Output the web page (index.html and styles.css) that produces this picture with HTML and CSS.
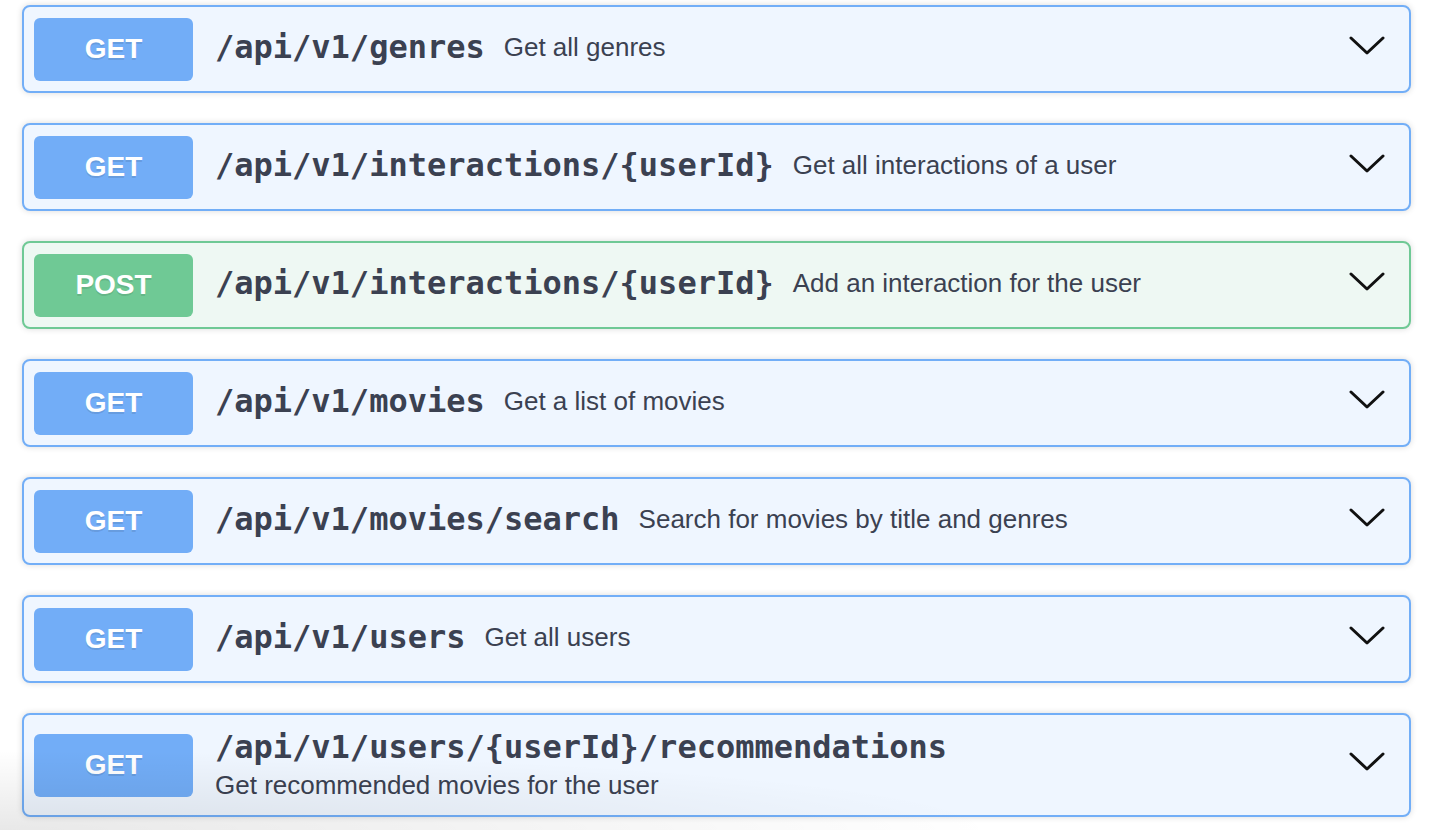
FILE: index.html
```html
<!DOCTYPE html>
<html>
<head>
<meta charset="utf-8">
<link rel="stylesheet" href="styles.css">
</head>
<body>
<div class="ops">
  <div class="op get">
    <span class="method">GET</span>
    <div class="info"><span class="path">/api/v1/genres</span><span class="desc">Get all genres</span></div>
    <svg class="chev" viewBox="0 0 36 20"><polyline points="2,2 18,17 34,2"/></svg>
  </div>
  <div class="op get">
    <span class="method">GET</span>
    <div class="info"><span class="path">/api/v1/interactions/{userId}</span><span class="desc">Get all interactions of a user</span></div>
    <svg class="chev" viewBox="0 0 36 20"><polyline points="2,2 18,17 34,2"/></svg>
  </div>
  <div class="op post">
    <span class="method">POST</span>
    <div class="info"><span class="path">/api/v1/interactions/{userId}</span><span class="desc">Add an interaction for the user</span></div>
    <svg class="chev" viewBox="0 0 36 20"><polyline points="2,2 18,17 34,2"/></svg>
  </div>
  <div class="op get">
    <span class="method">GET</span>
    <div class="info"><span class="path">/api/v1/movies</span><span class="desc">Get a list of movies</span></div>
    <svg class="chev" viewBox="0 0 36 20"><polyline points="2,2 18,17 34,2"/></svg>
  </div>
  <div class="op get">
    <span class="method">GET</span>
    <div class="info"><span class="path">/api/v1/movies/search</span><span class="desc">Search for movies by title and genres</span></div>
    <svg class="chev" viewBox="0 0 36 20"><polyline points="2,2 18,17 34,2"/></svg>
  </div>
  <div class="op get">
    <span class="method">GET</span>
    <div class="info"><span class="path">/api/v1/users</span><span class="desc">Get all users</span></div>
    <svg class="chev" viewBox="0 0 36 20"><polyline points="2,2 18,17 34,2"/></svg>
  </div>
  <div class="op get tall">
    <span class="method">GET</span>
    <div class="info stacked"><span class="path">/api/v1/users/{userId}/recommendations</span><span class="desc">Get recommended movies for the user</span></div>
    <svg class="chev" viewBox="0 0 36 20"><polyline points="2,2 18,17 34,2"/></svg>
  </div>
</div>
<div class="shade"></div>
</body>
</html>
```
FILE: styles.css
```css
html, body {
  margin: 0;
  padding: 0;
  background: #ffffff;
}
body {
  position: relative;
  padding: 5px 23px 0 22px;
  font-family: "Liberation Sans", Arial, sans-serif;
  color: #3b4151;
  overflow: hidden;
  height: 825px;
}
.ops {
  display: flex;
  flex-direction: column;
  gap: 30px;
}
.op {
  box-sizing: border-box;
  height: 88px;
  display: flex;
  align-items: center;
  padding: 0 24px 0 10px;
  border: 2px solid #72aef7;
  border-radius: 8px;
  background: #eff6ff;
  box-shadow: 0 0 6px rgba(0, 0, 0, 0.15);
}
.op.post {
  border-color: #6fc995;
  background: #eef8f3;
}
.op.tall {
  height: 104px;
}
.method {
  flex: none;
  width: 159px;
  height: 63px;
  border-radius: 6px;
  background: #72adf7;
  color: #fff;
  font-family: "Liberation Sans", Arial, sans-serif;
  font-weight: 700;
  font-size: 28px;
  display: flex;
  align-items: center;
  justify-content: center;
  text-shadow: 0 2px 0 rgba(0, 0, 0, 0.1);
}
.post .method {
  background: #6fc995;
}
.info {
  flex: 1;
  display: flex;
  align-items: baseline;
  margin-left: 22px;
  margin-top: -4px;
  min-width: 0;
}
.info.stacked {
  flex-direction: column;
  align-items: flex-start;
  gap: 0;
  margin-top: -2px;
}
.path {
  font-family: "DejaVu Sans Mono", "Liberation Mono", monospace;
  font-weight: 700;
  font-size: 32px;
  color: #3b4151;
  white-space: nowrap;
}
.desc {
  font-size: 26px;
  margin-left: 19px;
  color: #3b4151;
  white-space: nowrap;
  position: relative;
  top: -2px;
}
.stacked .desc {
  margin-left: 0;
  top: 0;
  margin-top: 4px;
}
.chev {
  flex: none;
  width: 36px;
  height: 20px;
  margin-top: -6px;
}
.chev polyline {
  fill: none;
  stroke: #111;
  stroke-width: 3;
  stroke-linecap: round;
  stroke-linejoin: round;
}
.shade {
  position: absolute;
  left: 0;
  bottom: 0;
  width: 1100px;
  height: 90px;
  pointer-events: none;
  background: radial-gradient(ellipse 1000px 80px at 0 100%, rgba(0, 0, 0, 0.09), rgba(0, 0, 0, 0) 100%);
}
```
